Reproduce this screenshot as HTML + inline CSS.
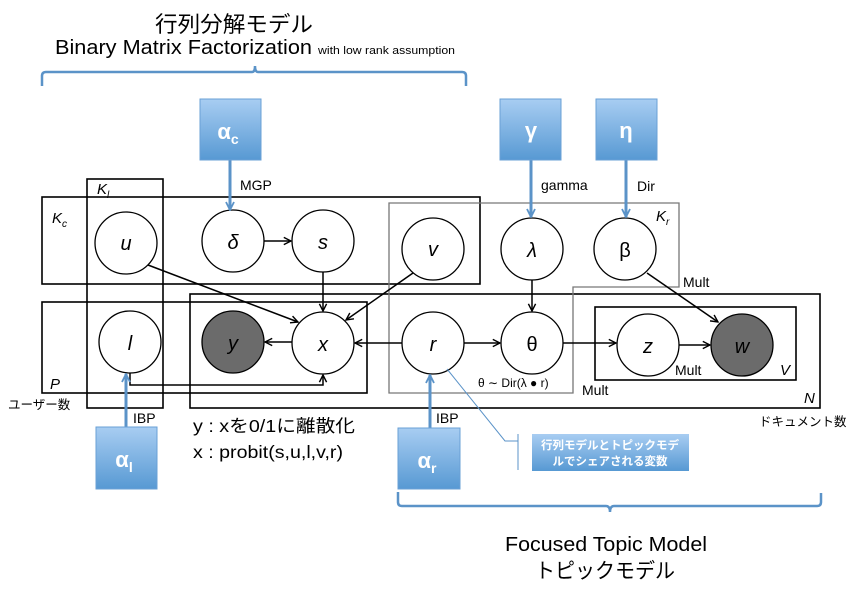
<!DOCTYPE html>
<html><head><meta charset="utf-8"><style>
html,body{margin:0;padding:0;background:#fff;width:862px;height:589px;overflow:hidden}
svg{display:block}
text{font-family:"Liberation Sans","Noto Sans CJK JP",sans-serif;fill:#000}
.it{font-style:italic}
.w,.w tspan{fill:#fff !important}
</style></head><body>
<svg width="862" height="589" viewBox="0 0 862 589" xmlns="http://www.w3.org/2000/svg">
<defs>
<linearGradient id="bg" x1="0" y1="0" x2="0" y2="1"><stop offset="0" stop-color="#a8cdf2"/><stop offset="1" stop-color="#5799d3"/></linearGradient>
<marker id="ar" viewBox="0 0 10 10" refX="9" refY="5" markerWidth="9" markerHeight="9" orient="auto" markerUnits="userSpaceOnUse"><path d="M1,1 L9,5 L1,9" fill="none" stroke="#000" stroke-width="1.6"/></marker>
<marker id="ab" viewBox="0 0 10 10" refX="9" refY="5" markerWidth="10" markerHeight="10" orient="auto" markerUnits="userSpaceOnUse"><path d="M1,1 L9,5 L1,9" fill="none" stroke="#5b93c8" stroke-width="1.8"/></marker>
</defs>

<!-- titles -->
<text x="155" y="32" font-size="22" textLength="158" lengthAdjust="spacingAndGlyphs">行列分解モデル</text>
<text x="55" y="54" font-size="20" textLength="257" lengthAdjust="spacingAndGlyphs">Binary Matrix Factorization</text>
<text x="318" y="54" font-size="11" textLength="137" lengthAdjust="spacingAndGlyphs">with low rank assumption</text>
<path d="M42,86 V76 Q42,72 46,72 H252 Q255,72 255,66 Q255,72 258,72 H462 Q466,72 466,76 V86" fill="none" stroke="#5b93c8" stroke-width="2.5"/>

<!-- plates -->
<g fill="none" stroke="#000" stroke-width="1.6">
<rect x="87" y="179" width="76" height="229"/>
<rect x="42" y="197" width="438" height="87"/>
<rect x="42" y="302" width="325" height="91"/>
<rect x="190" y="294" width="630" height="114"/>
<rect x="595" y="307" width="201" height="73"/>
</g>
<path d="M389,203 H679 V287 H573 V393 H389 Z" fill="none" stroke="#777" stroke-width="1.3"/>

<!-- plate labels -->
<text x="97" y="194" font-size="15" class="it">K<tspan font-size="10" dy="4">l</tspan></text>
<text x="52" y="223" font-size="15" class="it">K<tspan font-size="10" dy="4">c</tspan></text>
<text x="656" y="221" font-size="15" class="it">K<tspan font-size="10" dy="4">r</tspan></text>
<text x="50" y="389" font-size="15" class="it">P</text>
<text x="780" y="375" font-size="15" class="it">V</text>
<text x="804" y="403" font-size="15" class="it">N</text>
<text x="8" y="409" font-size="12.5">ユーザー数</text>
<text x="759" y="426" font-size="12.5">ドキュメント数</text>

<!-- edges -->
<g stroke="#000" stroke-width="1.5" fill="none" marker-end="url(#ar)">
<line x1="264" y1="241" x2="291" y2="241"/>
<line x1="323" y1="272" x2="323" y2="311"/>
<line x1="148" y1="265" x2="298" y2="322"/>
<line x1="413" y1="273" x2="346" y2="320"/>
<line x1="292" y1="342" x2="265" y2="342"/>
<line x1="402" y1="343" x2="355" y2="343"/>
<line x1="464" y1="343" x2="500" y2="343"/>
<line x1="532" y1="280" x2="532" y2="311"/>
<line x1="563" y1="343" x2="616" y2="343"/>
<line x1="679" y1="345" x2="710" y2="345"/>
<line x1="647" y1="273" x2="718" y2="322"/>
<path d="M130,373 V385 H323 V375"/>
</g>

<!-- nodes -->
<g stroke="#000" stroke-width="1.3">
<circle cx="126" cy="243" r="31" fill="#fff"/>
<circle cx="233" cy="241" r="31" fill="#fff"/>
<circle cx="323" cy="241" r="31" fill="#fff"/>
<circle cx="433" cy="249" r="31" fill="#fff"/>
<circle cx="532" cy="249" r="31" fill="#fff"/>
<circle cx="625" cy="249" r="31" fill="#fff"/>
<circle cx="130" cy="342" r="31" fill="#fff"/>
<circle cx="233" cy="342" r="31" fill="#6b6b6b"/>
<circle cx="323" cy="343" r="31" fill="#fff"/>
<circle cx="433" cy="343" r="31" fill="#fff"/>
<circle cx="532" cy="343" r="31" fill="#fff"/>
<circle cx="648" cy="345" r="31" fill="#fff"/>
<circle cx="742" cy="345" r="31" fill="#6b6b6b"/>
</g>
<g font-size="20" text-anchor="middle">
<text x="126" y="250" class="it">u</text>
<text x="233" y="249" class="it">δ</text>
<text x="323" y="249" class="it">s</text>
<text x="433" y="256" class="it">v</text>
<text x="532" y="257" class="it">λ</text>
<text x="625" y="257">β</text>
<text x="130" y="350" class="it">l</text>
<text x="233" y="350" class="it">y</text>
<text x="323" y="351" class="it">x</text>
<text x="433" y="351" class="it">r</text>
<text x="532" y="351">θ</text>
<text x="648" y="353" class="it">z</text>
<text x="742" y="353" class="it">w</text>
</g>

<!-- edge labels -->
<g font-size="14">
<text x="240" y="190">MGP</text>
<text x="541" y="190">gamma</text>
<text x="637" y="191">Dir</text>
<text x="683" y="287">Mult</text>
<text x="675" y="375">Mult</text>
<text x="582" y="395">Mult</text>
<text x="478" y="387" font-size="12">θ ∼ Dir(λ ● r)</text>
<text x="133" y="423">IBP</text>
<text x="436" y="423">IBP</text>
</g>

<!-- blue hyperparams -->
<g stroke="#5b93c8" stroke-width="3" fill="none" marker-end="url(#ab)">
<line x1="230" y1="160" x2="230" y2="210"/>
<line x1="531" y1="160" x2="531" y2="217"/>
<line x1="626" y1="160" x2="626" y2="217"/>
<line x1="126" y1="427" x2="126" y2="374"/>
<line x1="430" y1="428" x2="430" y2="375"/>
</g>
<g fill="url(#bg)" stroke="#6aa0d6" stroke-width="1">
<rect x="200" y="99" width="61" height="61"/>
<rect x="500" y="99" width="61" height="61"/>
<rect x="596" y="99" width="61" height="61"/>
<rect x="96" y="427" width="61" height="62"/>
<rect x="398" y="428" width="62" height="61"/>
</g>
<g font-size="22" font-weight="bold" text-anchor="middle">
<text class="w" x="228" y="139">α<tspan font-size="14" dy="5">c</tspan></text>
<text class="w" x="531" y="138">γ</text>
<text class="w" x="626" y="138">η</text>
<text class="w" x="124" y="467">α<tspan font-size="14" dy="5">l</tspan></text>
<text class="w" x="427" y="468">α<tspan font-size="14" dy="5">r</tspan></text>
</g>

<!-- callout -->
<path d="M447,369 L505,441 H518 M518,434 V470" fill="none" stroke="#5b93c8" stroke-width="1"/>
<rect x="532" y="434" width="157" height="37" fill="url(#bg)"/>
<text class="w" x="610" y="449" font-size="11.5" font-weight="bold" text-anchor="middle">行列モデルとトピックモデ</text>
<text class="w" x="610" y="465" font-size="11.5" font-weight="bold" text-anchor="middle">ルでシェアされる変数</text>

<!-- bottom -->
<text x="193" y="432" font-size="17.5" textLength="162" lengthAdjust="spacingAndGlyphs">y : xを0/1に離散化</text>
<text x="193" y="458" font-size="17.5" textLength="150" lengthAdjust="spacingAndGlyphs">x : probit(s,u,l,v,r)</text>
<path d="M398,492 V502 Q398,506 402,506 H606 Q610,506 610,512 Q610,506 614,506 H817 Q821,506 821,502 V493" fill="none" stroke="#5b93c8" stroke-width="2.5"/>
<text x="505" y="551" font-size="20" textLength="202" lengthAdjust="spacingAndGlyphs">Focused Topic Model</text>
<text x="535" y="578" font-size="21" textLength="140" lengthAdjust="spacingAndGlyphs">トピックモデル</text>
</svg>
</body></html>
